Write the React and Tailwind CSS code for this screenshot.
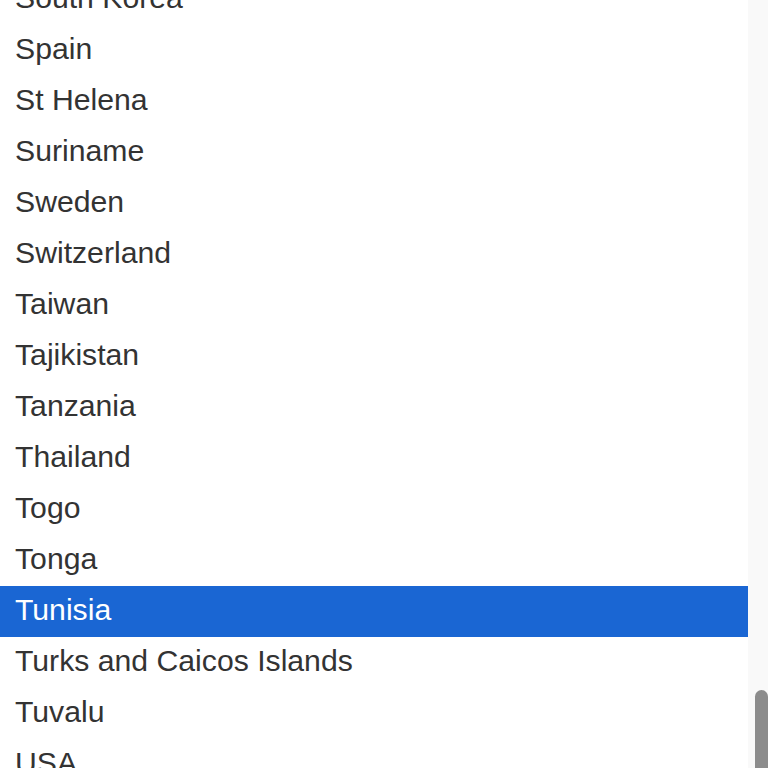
import React from 'react';

const countries = [
  'South Korea',
  'Spain',
  'St Helena',
  'Suriname',
  'Sweden',
  'Switzerland',
  'Taiwan',
  'Tajikistan',
  'Tanzania',
  'Thailand',
  'Togo',
  'Tonga',
  'Tunisia',
  'Turks and Caicos Islands',
  'Tuvalu',
  'USA',
];

const selected = 'Tunisia';

export default function App() {
  return (
    <div className="flex h-screen w-full overflow-hidden bg-white font-['Liberation_Sans',Arial,sans-serif]">
      <ul className="-mt-[26px] flex-1">
        {countries.map((name) => (
          <li
            key={name}
            className={
              name === selected
                ? 'h-[51px] flex items-center pl-[15px] pb-[3px] text-[30.2px] leading-none bg-[#1a66d3] text-white'
                : 'h-[51px] flex items-center pl-[15px] pb-[3px] text-[30.2px] leading-none text-[#333333]'
            }
          >
            {name}
          </li>
        ))}
      </ul>
      <div className="flex w-[20px] flex-col bg-[#f9f9f9] pt-[690px] pl-[7px]">
        <div className="flex-1 rounded-t-full bg-[#8c8c8c]" />
      </div>
    </div>
  );
}
